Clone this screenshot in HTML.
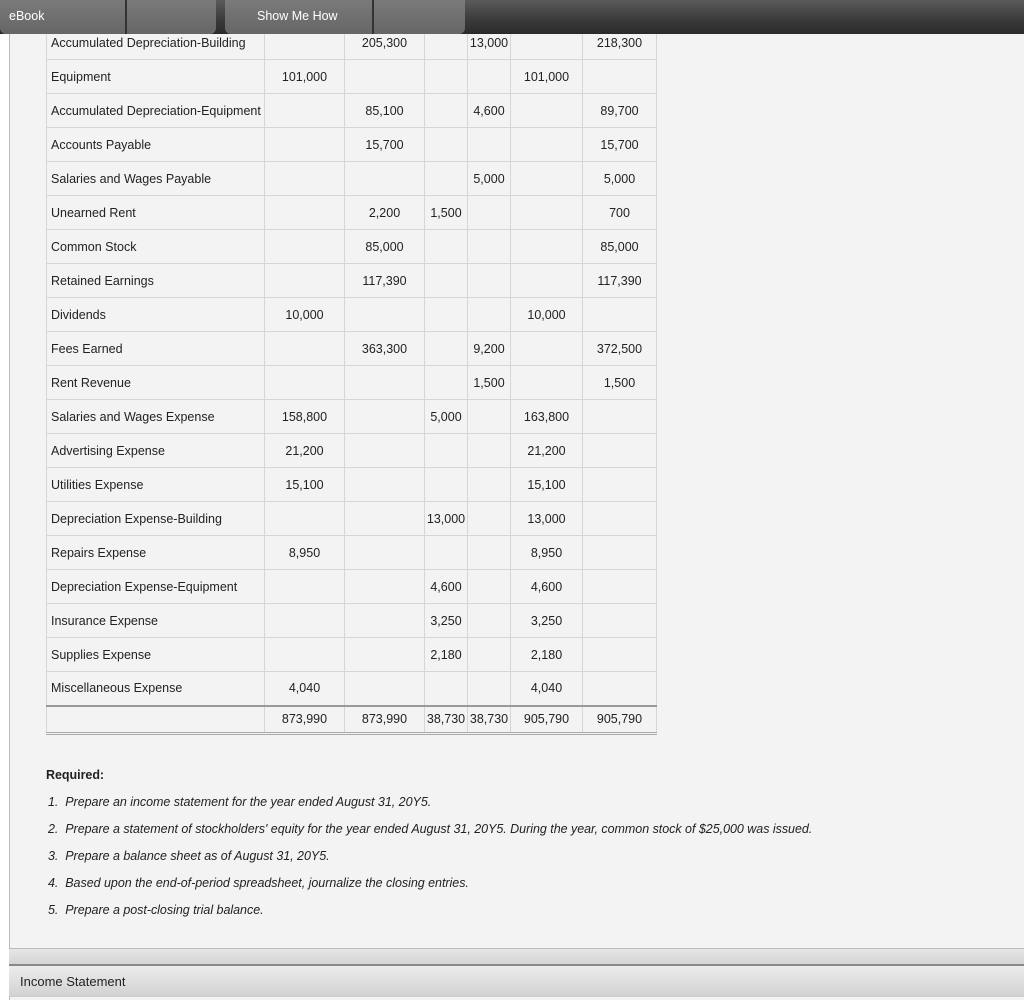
<!DOCTYPE html>
<html><head><meta charset="utf-8"><style>
*{margin:0;padding:0;box-sizing:border-box}
body{width:1024px;height:1000px;overflow:hidden;background:#fff;font-family:"Liberation Sans",Arial,sans-serif;font-size:12.5px;color:#222;position:relative}
#main{position:absolute;left:9px;top:0;width:1015px;height:1000px;background:#f3f3f3;border-left:1px solid #bbb}
#hdr{position:absolute;left:0;top:0;width:1024px;height:34px;background:linear-gradient(#5a5a5a,#3a3a3a 60%,#2a2a2a);z-index:5}
.tab{position:absolute;top:0;height:34px;background:linear-gradient(#7a7a7a,#666);border-radius:0 0 6px 6px;color:#fff;font-size:12.5px}
.sep{position:absolute;top:0;width:2px;height:34px;background:#333}
table{position:absolute;left:46px;top:25px;border-collapse:collapse;table-layout:fixed}
td{height:34px;border:1px solid #d6d6d6;text-align:center;padding:0;white-space:nowrap}
td:first-child{text-align:left;padding-left:4px}
tr.tot td{border-top:2px solid #999;border-bottom:3px double #aaa;height:28px}
#req{position:absolute;left:46px;top:768px;font-size:12.5px;letter-spacing:-0.03px}
#req p{height:27px;font-style:italic;padding-left:2px}
#req b{display:block;height:27px;font-style:normal}
#band{position:absolute;left:9px;top:948px;width:1015px;height:18px;background:linear-gradient(#e6e6e6,#d4d4d4);border-top:1px solid #bbb;border-bottom:2px solid #888}
#inc{position:absolute;left:9px;top:966px;width:1015px;height:31px;background:linear-gradient(#ececec,#d2d2d2);padding:8px 0 0 11px;font-size:13px;border-bottom:1px solid #ccc}
</style></head><body>
<div id="main"></div>
<div id="hdr">
<div class="tab" style="left:0;width:216px"><span style="position:absolute;left:9px;top:9px">eBook</span></div>
<div class="sep" style="left:125px"></div>
<div class="tab" style="left:225px;width:240px"><span style="position:absolute;left:32px;top:9px">Show Me How</span></div>
<div class="sep" style="left:372px"></div>
</div>
<table>
<colgroup><col style="width:218px"><col style="width:80px"><col style="width:80px"><col style="width:43px"><col style="width:43px"><col style="width:72px"><col style="width:74px"></colgroup>
<tr><td>Accumulated Depreciation-Building</td><td></td><td>205,300</td><td></td><td>13,000</td><td></td><td>218,300</td></tr>
<tr><td>Equipment</td><td>101,000</td><td></td><td></td><td></td><td>101,000</td><td></td></tr>
<tr><td>Accumulated Depreciation-Equipment</td><td></td><td>85,100</td><td></td><td>4,600</td><td></td><td>89,700</td></tr>
<tr><td>Accounts Payable</td><td></td><td>15,700</td><td></td><td></td><td></td><td>15,700</td></tr>
<tr><td>Salaries and Wages Payable</td><td></td><td></td><td></td><td>5,000</td><td></td><td>5,000</td></tr>
<tr><td>Unearned Rent</td><td></td><td>2,200</td><td>1,500</td><td></td><td></td><td>700</td></tr>
<tr><td>Common Stock</td><td></td><td>85,000</td><td></td><td></td><td></td><td>85,000</td></tr>
<tr><td>Retained Earnings</td><td></td><td>117,390</td><td></td><td></td><td></td><td>117,390</td></tr>
<tr><td>Dividends</td><td>10,000</td><td></td><td></td><td></td><td>10,000</td><td></td></tr>
<tr><td>Fees Earned</td><td></td><td>363,300</td><td></td><td>9,200</td><td></td><td>372,500</td></tr>
<tr><td>Rent Revenue</td><td></td><td></td><td></td><td>1,500</td><td></td><td>1,500</td></tr>
<tr><td>Salaries and Wages Expense</td><td>158,800</td><td></td><td>5,000</td><td></td><td>163,800</td><td></td></tr>
<tr><td>Advertising Expense</td><td>21,200</td><td></td><td></td><td></td><td>21,200</td><td></td></tr>
<tr><td>Utilities Expense</td><td>15,100</td><td></td><td></td><td></td><td>15,100</td><td></td></tr>
<tr><td>Depreciation Expense-Building</td><td></td><td></td><td>13,000</td><td></td><td>13,000</td><td></td></tr>
<tr><td>Repairs Expense</td><td>8,950</td><td></td><td></td><td></td><td>8,950</td><td></td></tr>
<tr><td>Depreciation Expense-Equipment</td><td></td><td></td><td>4,600</td><td></td><td>4,600</td><td></td></tr>
<tr><td>Insurance Expense</td><td></td><td></td><td>3,250</td><td></td><td>3,250</td><td></td></tr>
<tr><td>Supplies Expense</td><td></td><td></td><td>2,180</td><td></td><td>2,180</td><td></td></tr>
<tr><td>Miscellaneous Expense</td><td>4,040</td><td></td><td></td><td></td><td>4,040</td><td></td></tr>
<tr class="tot"><td></td><td>873,990</td><td>873,990</td><td>38,730</td><td>38,730</td><td>905,790</td><td>905,790</td></tr>
</table>
<div id="req">
<b>Required:</b>
<p>1.&nbsp; Prepare an income statement for the year ended August 31, 20Y5.</p>
<p>2.&nbsp; Prepare a statement of stockholders' equity for the year ended August 31, 20Y5. During the year, common stock of $25,000 was issued.</p>
<p>3.&nbsp; Prepare a balance sheet as of August 31, 20Y5.</p>
<p>4.&nbsp; Based upon the end-of-period spreadsheet, journalize the closing entries.</p>
<p>5.&nbsp; Prepare a post-closing trial balance.</p>
</div>
<div id="band"></div>
<div id="inc">Income Statement</div>
</body></html>
